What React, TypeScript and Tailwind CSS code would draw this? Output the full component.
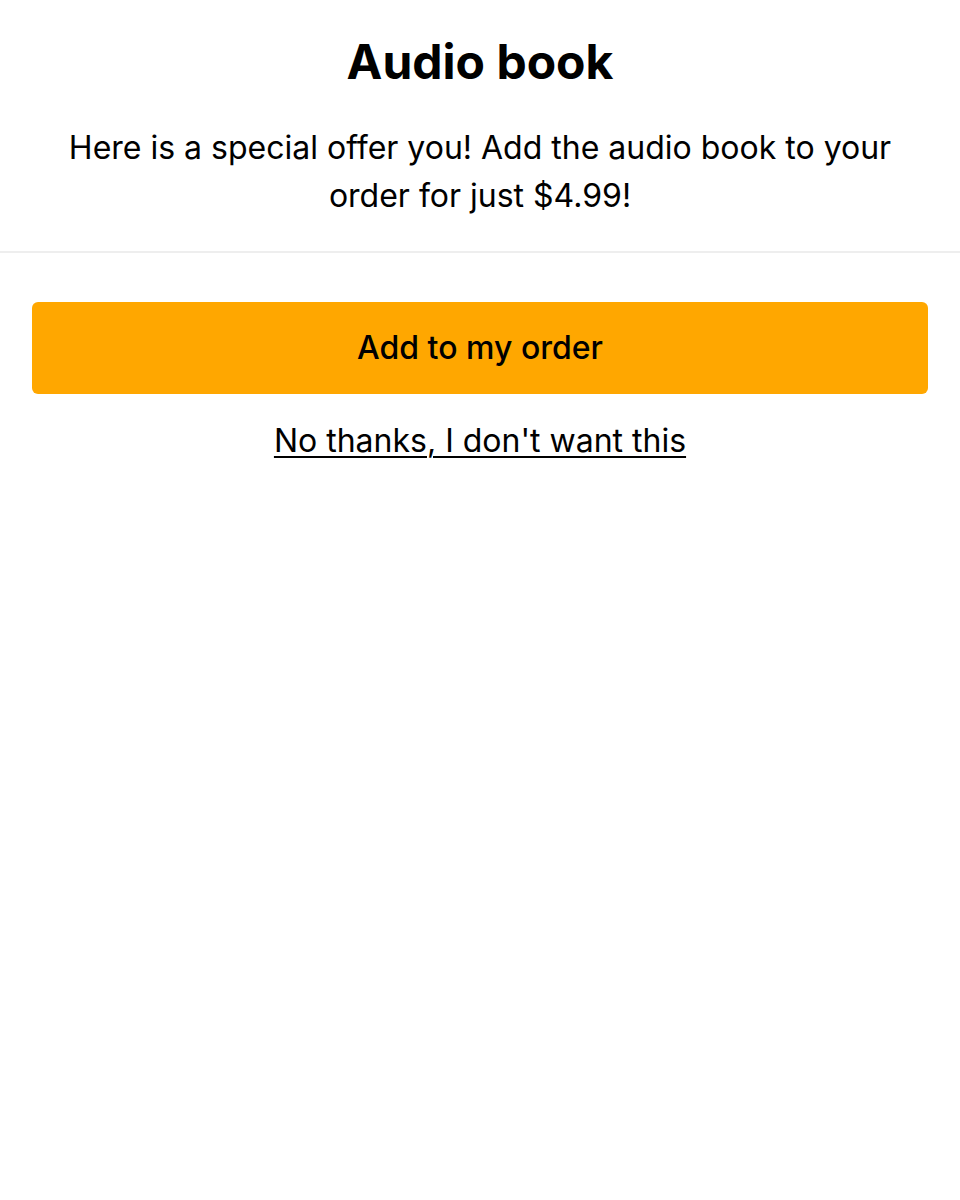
import React from 'react';

export default function App() {
  return (
    <div className="min-h-screen bg-white text-black" style={{ fontFamily: 'Inter, "Noto Sans", sans-serif' }}>
      {/* Header */}
      <div className="border-b-2 border-[#eeeeee] px-8 pt-[30px] pb-[31px] text-center">
        <h1 className="text-[48px] font-bold leading-[64px]">Audio book</h1>
        <p className="mt-[30px] text-[32px] leading-[48px]">
          Here is a special offer you! Add the audio book to your order for just $4.99!
        </p>
      </div>

      {/* Actions */}
      <div className="flex flex-col items-center px-8 pt-[49px]">
        <button className="h-[92px] w-full rounded-md bg-[#ffa700] text-[32px] font-medium">
          Add to my order
        </button>
        <button className="mt-[23px] text-[32px] leading-[48px] underline decoration-2 underline-offset-[4px]">
          No thanks, I don't want this
        </button>
      </div>
    </div>
  );
}
